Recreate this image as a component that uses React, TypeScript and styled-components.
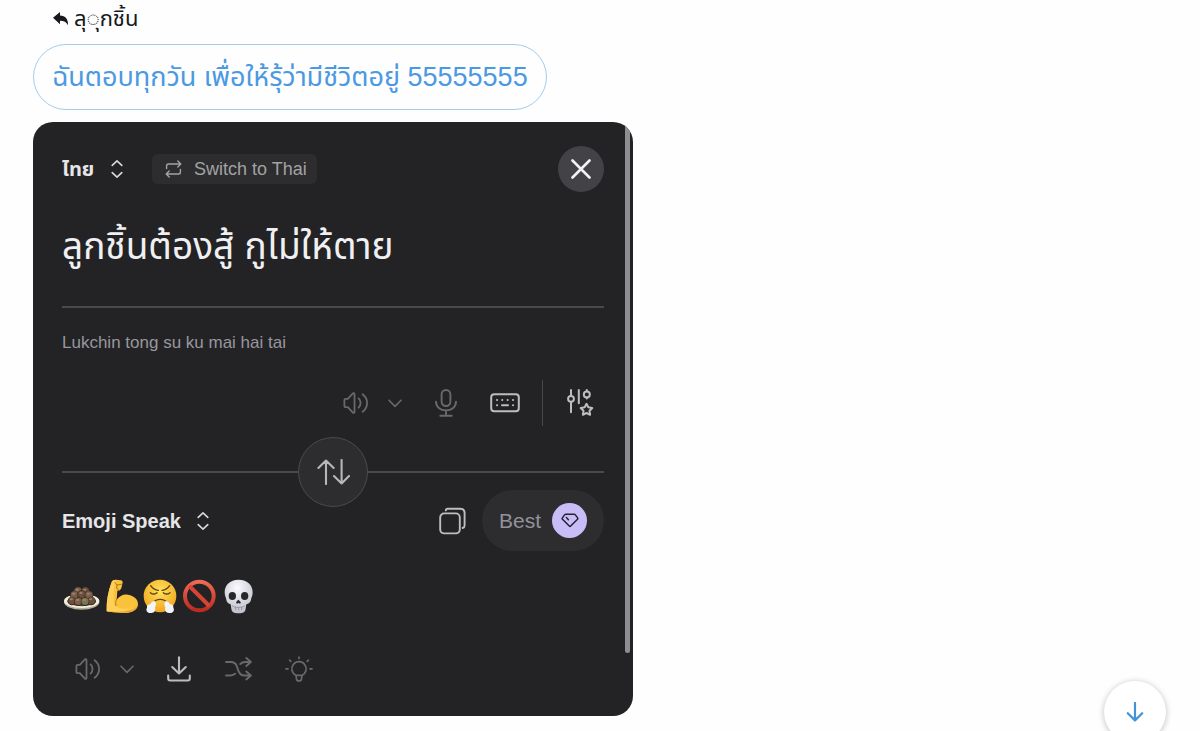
import React from "react";
import styled, { createGlobalStyle } from "styled-components";

const sans = `"Liberation Sans", "Noto Sans Thai", "Noto Sans", sans-serif`;

const GlobalStyle = createGlobalStyle`
  *, *::before, *::after { box-sizing: border-box; }
  body { margin: 0; background: #fefefe; font-family: ${sans}; }
  button, select, textarea { font-family: inherit; margin: 0; padding: 0; border: 0; background: none; color: inherit; }
  button, select { cursor: pointer; }
  svg { display: block; flex: none; }
`;

const Page = styled.main`
  display: flex;
  flex-direction: column;
  align-items: flex-start;
  padding: 0 0 14px 33px;
`;

const ReplyTo = styled.div`
  display: flex;
  align-items: center;
  gap: 5px;
  height: 38px;
  padding-left: 20px;
  font-size: 22px;
  line-height: 38px;
  color: #17191c;
`;

const Bubble = styled.p`
  margin: 6px 0 12px;
  padding: 0 18px;
  border: 1px solid #a3cdee;
  border-radius: 33px;
  font-size: 27px;
  line-height: 64px;
  white-space: nowrap;
  color: #4a99e2;
`;

const Card = styled.section`
  position: relative;
  width: 50vw;
  min-width: 560px;
  padding: 24px 29px 27px;
  border-radius: 20px;
  overflow: hidden;
  background: #232325;
  color: #ececee;
`;

const ScrollThumb = styled.div`
  position: absolute;
  top: 0;
  right: 3px;
  width: 5px;
  height: 531px;
  border-radius: 0 0 3px 3px;
  background: #8e8e90;
`;

const Row = styled.div<{ $height: number }>`
  display: flex;
  align-items: center;
  height: ${(p) => p.$height}px;
`;

const LanguagePicker = styled.label`
  display: flex;
  align-items: center;
  gap: 16px;
  color: #d8d8da;
`;

const LanguageSelect = styled.select`
  appearance: none;
  font-size: 20px;
  line-height: 32px;
  font-weight: 700;
  color: #e6e6e8;
`;

const SwitchButton = styled.button`
  display: flex;
  align-items: center;
  gap: 12px;
  height: 30px;
  margin-left: 29px;
  padding: 0 10px 0 13px;
  border-radius: 6px;
  background: #2d2d2f;
  font-size: 18px;
  color: #a2a2a5;
`;

const CloseButton = styled.button`
  display: grid;
  place-items: center;
  width: 46px;
  height: 46px;
  margin-left: auto;
  border-radius: 50%;
  background: #434347;
  color: #f2f2f4;
`;

const SourceText = styled.textarea`
  display: block;
  width: 100%;
  height: 99px;
  margin-top: 15px;
  resize: none;
  overflow: hidden;
  outline: 0;
  font-size: 37px;
  line-height: 80px;
  color: #f0f0f2;
`;

const Divider = styled.hr`
  flex: 1;
  margin: 0;
  height: 2px;
  border: 0;
  background: #4a4a4c;
`;

const Transliteration = styled.p`
  margin: 22px 0 24px;
  font-size: 17px;
  line-height: 26px;
  color: #97979f;
`;

const IconButton = styled.button<{ $active?: boolean }>`
  display: grid;
  place-items: center;
  color: ${(p) => (p.$active ? "#bdbdbf" : "#69696c")};
`;

const SourceTools = styled(Row)`
  justify-content: flex-end;
  padding-right: 10px;
`;

const Separator = styled.span`
  width: 1px;
  height: 46px;
  margin: 0 24px 0 22px;
  background: #48484b;
`;

const SwapRow = styled(Row)`
  margin: 11px 0 -17px;
`;

const SwapButton = styled.button`
  display: grid;
  place-items: center;
  width: 70px;
  height: 70px;
  border: 1px solid #4b4b4d;
  border-radius: 50%;
  background: #2d2d2f;
  color: #b7b7b9;
`;

const TargetTools = styled.div`
  display: flex;
  align-items: center;
  gap: 16px;
  margin-left: auto;
`;

const QualityButton = styled.button`
  display: flex;
  align-items: center;
  gap: 11px;
  height: 61px;
  padding: 0 17px;
  border-radius: 31px;
  background: #2d2d2f;
  font-size: 21px;
  color: #92929a;
`;

const QualityBadge = styled.span`
  display: grid;
  place-items: center;
  width: 35px;
  height: 35px;
  border-radius: 50%;
  background: #c9bdf8;
  color: #252331;
`;

const EmojiOutput = styled.div`
  display: flex;
  gap: 3px;
  margin: 27px 0 35px 2px;
`;

const ResultTools = styled(Row)`
  padding-left: 13px;
`;

const JumpButton = styled.button`
  position: fixed;
  right: 34px;
  bottom: -12px;
  display: grid;
  place-items: center;
  width: 62px;
  height: 62px;
  border-radius: 50%;
  background: #fff;
  box-shadow: 0 1px 6px rgba(0, 0, 0, 0.26);
  color: #4590da;
`;

type IconProps = { w: number; h: number; sw?: number; children: React.ReactNode };
const Icon = ({ w, h, sw = 2, children }: IconProps) => (
  <svg width={w} height={h} viewBox={`0 0 ${w} ${h}`} fill="none" stroke="currentColor" strokeWidth={sw} strokeLinecap="round" strokeLinejoin="round" aria-hidden="true">
    {children}
  </svg>
);

const UpDown = () => (
  <Icon w={12} h={20} sw={1.6}><path d="M1.2 6.4 6 1.8l4.8 4.6M1.2 13.6 6 18.2l4.8-4.6" /></Icon>
);
const Speaker = () => (
  <Icon w={26} h={24} sw={1.8}>
    <path d="M1.4 8.9c0-.7.4-1.1 1.1-1.1h2.3L9.9 2.4c.6-.6 1.6-.2 1.6.6v18c0 .8-1 1.2-1.6.6l-5.1-5.4H2.5c-.7 0-1.1-.4-1.1-1.1V8.9Z" />
    <path d="M15.6 7.4c2.6 2.4 2.6 6.8 0 9.2M19.6 3.2c6 4.6 6 13 0 17.6" />
  </Icon>
);
const Chevron = () => (
  <Icon w={14} h={9} sw={1.6}><path d="m1 1.2 6 6.2 6-6.2" /></Icon>
);
const Mic = () => (
  <Icon w={22} h={28} sw={1.9}>
    <rect x="6.6" y="1" width="8.8" height="16" rx="4.4" />
    <path d="M1 12.6c0 5.3 4.3 8.8 10 8.8s10-3.5 10-8.8M11 21.4v5.2M5.3 26.8h11.4" />
  </Icon>
);
const Keyboard = () => (
  <Icon w={30} h={20}>
    <rect x="1.2" y="1.2" width="27.6" height="17" rx="3" />
    <path d="M7 7h.1M12.2 7h.1M17.6 7h.1M23 7h.1M7 12.3h.1M23 12.3h.1M12 12.3h6" />
  </Icon>
);
const Tune = () => (
  <Icon w={27} h={28}>
    <path d="M4 1v5.8M4 13v10.3M11.8 1v13.2M19.8 1v1M19.8 8.6v1" />
    <circle cx="4" cy="9.8" r="2.9" />
    <circle cx="19.8" cy="5.4" r="3" />
    <path d="m19.5 14.8 1.8 3.5 4 .7-2.8 2.8.6 4-3.6-1.8-3.6 1.8.6-4-2.8-2.8 4-.7 1.8-3.5Z" />
  </Icon>
);
const SwapArrows = () => (
  <Icon w={34} h={26} sw={2.1}>
    <path d="M10 25V1.5M2.4 9 10 1.5 17.6 9M25.6 1v23.5M18 17l7.6 7.5 7.4-7.5" />
  </Icon>
);
const Copy = () => (
  <Icon w={27} h={28} sw={1.9}>
    <rect x="1.2" y="6.4" width="19.6" height="20" rx="4" />
    <path d="M6.8 3.4c0-1.1.7-1.7 1.8-1.7h12.6c2.6 0 4.4 1.7 4.4 4.3v12.4c0 1.4-.7 2.2-2 2.6" />
  </Icon>
);
const Repeat = () => (
  <Icon w={17} h={18} sw={1.4}>
    <path d="M1.6 8.6V5.8c0-1.1.7-1.8 1.8-1.8h12.2M12.8 1l3 3-3 3M15.4 9.4v2.8c0 1.1-.7 1.8-1.8 1.8H1.4M4.2 11l-3 3 3 3" />
  </Icon>
);
const Download = () => (
  <Icon w={24} h={26} sw={2.1}>
    <path d="M12 1.2v16M5.2 11l6.8 6.4 6.8-6.4M1.2 19.5v3c0 1.3.8 2 2 2h17.6c1.2 0 2-.7 2-2v-3" />
  </Icon>
);
const Shuffle = () => (
  <Icon w={28} h={24} sw={1.9}>
    <path d="M2 5h4.8c3.2 0 5 1.2 6.1 4.4l1.4 4.2c1.1 3.3 3 4.9 6.4 4.9h6M2 18.5h4.2c2.2 0 3.9-.6 5-1.8M16.2 7.1C17.4 5.7 19.2 5 21.4 5h5.3M22.3 1l4.6 4-4.6 4M22.3 14.5l4.6 4-4.6 4" />
  </Icon>
);
const Bulb = () => (
  <Icon w={28} h={26} sw={1.7}>
    <path d="M11 19.4a7.2 7.2 0 1 1 6 0M11 19.4h6l-.5 3.6c-.2 1.2-1.1 1.9-2.5 1.9s-2.3-.7-2.5-1.9L11 19.4ZM14 1v1.4M4.6 4.2l1.2 1.2M23.4 4.2l-1.2 1.2M1 12.8h2M25 12.8h2" />
  </Icon>
);

const Emoji = ({ x, label, children }: { x: number; label: string; children: React.ReactNode }) => (
  <svg width="36" height="36" viewBox={`${x} 25 108 108`} role="img" aria-label={label}>{children}</svg>
);

const Meatballs = () => (
  <Emoji x={42} label="Meatballs">
    <ellipse cx="95" cy="97" rx="53" ry="23" fill="#b5ad99" />
    <ellipse cx="95" cy="94" rx="53" ry="21" fill="#f3eedf" />
    <ellipse cx="95" cy="95" rx="43" ry="15" fill="#5a4a38" />
    {[[84, 65], [106, 65], [73, 77], [95, 75], [117, 77], [66, 94], [85, 96], [124, 94], [105, 96]].map(([cx, cy], i) => (
      <g key={i}>
        <circle cx={cx} cy={cy} r="13" fill="#35281f" />
        <circle cx={cx} cy={cy - 1} r="11" fill={i === 8 ? "#77754f" : i % 2 ? "#6a4f3e" : "#7b5f4b"} />
        <ellipse cx={cx - 2} cy={cy - 5} rx="5" ry="3" fill="#9c826e" />
      </g>
    ))}
  </Emoji>
);

const Biceps = () => (
  <Emoji x={159} label="Flexed biceps">
    <path d="M170 125c-1-32 4-58 15-88 2-5 7-7 13-7l15 2c5 1 6 6 4 11l-3 13c-2 5-6 7-12 7l-2 27c9-12 21-18 34-15 18 3 30 14 30 28 0 15-14 26-38 26-20 0-39-1-56-4Z" fill="#f8c23b" />
    <path d="M170 125c-1-32 4-58 15-88 2-5 7-7 13-7-7 25-9 52-6 75 16 15 43 16 69 6-6 11-18 18-35 18-20 0-39-1-56-4Z" fill="#ffd058" />
    <path d="M170 125c20 2 47 3 70-4 11-3 19-9 23-16-1 14-15 24-37 24-20 0-39-1-56-4Z" fill="#eba62b" />
    <path d="M200 88c-3 7-4 13-2 20M194 38l7 8 13-2M201 46l-1 10 8 6" fill="none" stroke="#b9781c" strokeWidth="3" strokeLinecap="round" />
  </Emoji>
);

const SteamFace = () => (
  <Emoji x={276} label="Face with steam from nose">
    <defs>
      <radialGradient id="face" cx="50%" cy="35%" r="65%">
        <stop offset="0" stopColor="#ffe25b" /><stop offset="1" stopColor="#f2a51c" />
      </radialGradient>
    </defs>
    <circle cx="330" cy="79" r="49" fill="url(#face)" />
    <path d="M302 48c6 9 13 13 23 14M359 48c-6 9-13 13-23 14M301 69c6 5 14 5 20 0M340 69c6 5 14 5 20 0M309 99c10-13 33-13 43 0" fill="none" stroke="#62401c" strokeWidth="4" strokeLinecap="round" />
    <path d="M314 94c5 5 5 14 1 19 3 9-2 17-11 17-12 1-18-8-13-16-1-7 4-11 10-10 2-6 7-10 13-10ZM347 94c-5 5-5 14-1 19-3 9 2 17 11 17 12 1 18-8 13-16 1-7-4-11-10-10-2-6-7-10-13-10Z" fill="#f2f4fb" />
  </Emoji>
);

const Prohibited = () => (
  <Emoji x={393} label="Prohibited">
    <defs>
      <linearGradient id="ban" x1="0" y1="0" x2="0" y2="1">
        <stop offset="0" stopColor="#ef6955" /><stop offset="1" stopColor="#bd2b20" />
      </linearGradient>
    </defs>
    <circle cx="448" cy="79" r="43" fill="none" stroke="url(#ban)" strokeWidth="12" />
    <path d="m418 49 60 60" stroke="#d74434" strokeWidth="12" />
  </Emoji>
);

const Skull = () => (
  <Emoji x={510} label="Skull">
    <defs>
      <radialGradient id="bone" cx="45%" cy="25%" r="75%">
        <stop offset="0" stopColor="#fafaff" /><stop offset="1" stopColor="#bfc0ca" />
      </radialGradient>
    </defs>
    <path d="M566 30c27 0 42 17 42 38 0 11-4 16-5 22-1 8-7 11-14 14-2 10-1 18-6 23-7 5-28 5-35 0-5-5-4-13-6-23-7-3-12-6-13-14-1-6-5-11-5-22 0-21 15-38 42-38Z" fill="url(#bone)" />
    <ellipse cx="547" cy="79" rx="11" ry="12" fill="#27272c" />
    <ellipse cx="584" cy="79" rx="11" ry="12" fill="#27272c" />
    <path d="M565 90c-5 4-8 8-6 11 2 2 4 0 6-1 3 1 5 3 7 1 2-3-2-7-7-11Z" fill="#2b2b30" />
    <path d="M546 108c10 7 29 7 39 0M557 112v9M566 113v9M575 112v9" fill="none" stroke="#8d8e98" strokeWidth="2.5" />
  </Emoji>
);

const AudioGroup = styled.div`
  display: flex;
  align-items: center;
  gap: 19px;
`;

const Audio = () => (
  <AudioGroup>
    <IconButton aria-label="Listen"><Speaker /></IconButton>
    <IconButton aria-label="Voice options"><Chevron /></IconButton>
  </AudioGroup>
);

const ToolGroup = styled.div`
  display: flex;
  align-items: center;
  gap: 33px;
`;

export default function App() {
  return (
    <>
      <GlobalStyle />
      <Page>
        <ReplyTo>
          <svg width="16" height="14" viewBox="0 0 16 14" fill="currentColor" aria-hidden="true">
            <path d="M0 5.8 7 0v3.4c5.4.1 8.3 3.4 8 9.8-1.7-3-3.8-4.3-8-4.4v3.4L0 5.8Z" />
          </svg>
          <span>ลุ◌ุกชิ้น</span>
        </ReplyTo>
        <Bubble>ฉันตอบทุกวัน เพื่อให้รุ้ว่ามีชีวิตอยู่ 55555555</Bubble>

        <Card>
          <Row $height={46}>
            <LanguagePicker>
              <LanguageSelect aria-label="Source language"><option>ไทย</option></LanguageSelect>
              <UpDown />
            </LanguagePicker>
            <SwitchButton><Repeat />Switch to Thai</SwitchButton>
            <CloseButton aria-label="Close">
              <Icon w={20} h={20} sw={2.6}><path d="m1.5 1.5 17 17M18.5 1.5l-17 17" /></Icon>
            </CloseButton>
          </Row>

          <SourceText aria-label="Text to translate" rows={1} spellCheck={false} defaultValue="ลูกชิ้นต้องสู้ กูไม่ให้ตาย" />
          <Divider />
          <Transliteration>Lukchin tong su ku mai hai tai</Transliteration>

          <SourceTools $height={46}>
            <ToolGroup>
              <Audio />
              <IconButton aria-label="Dictate"><Mic /></IconButton>
              <IconButton $active aria-label="Keyboard"><Keyboard /></IconButton>
            </ToolGroup>
            <Separator />
            <IconButton $active aria-label="Customise"><Tune /></IconButton>
          </SourceTools>

          <SwapRow $height={70}>
            <Divider />
            <SwapButton aria-label="Swap languages"><SwapArrows /></SwapButton>
            <Divider />
          </SwapRow>

          <Row $height={61}>
            <LanguagePicker>
              <LanguageSelect aria-label="Target language"><option>Emoji Speak</option></LanguageSelect>
              <UpDown />
            </LanguagePicker>
            <TargetTools>
              <IconButton $active aria-label="Copy"><Copy /></IconButton>
              <QualityButton>
                Best
                <QualityBadge>
                  <Icon w={18} h={15} sw={1.5}>
                    <path d="M5 1.2h8c.6 0 1 .2 1.4.7l2.2 3c.4.5.3 1-.1 1.4L9.7 13c-.5.5-.9.5-1.4 0L1.5 6.3c-.4-.4-.5-.9-.1-1.4l2.2-3c.4-.5.8-.7 1.4-.7ZM5.4 4.6l2 2.2" />
                  </Icon>
                </QualityBadge>
              </QualityButton>
            </TargetTools>
          </Row>

          <EmojiOutput>
            <Meatballs /><Biceps /><SteamFace /><Prohibited /><Skull />
          </EmojiOutput>

          <ResultTools $height={40}>
            <ToolGroup>
              <Audio />
              <IconButton $active aria-label="Download"><Download /></IconButton>
              <IconButton aria-label="Shuffle"><Shuffle /></IconButton>
              <IconButton aria-label="Ideas"><Bulb /></IconButton>
            </ToolGroup>
          </ResultTools>
          <ScrollThumb />
        </Card>
      </Page>
      <JumpButton aria-label="Jump to latest">
        <Icon w={18} h={20} sw={2.2}><path d="M9 1v17M1.8 11.2 9 18.4l7.2-7.2" /></Icon>
      </JumpButton>
    </>
  );
}
